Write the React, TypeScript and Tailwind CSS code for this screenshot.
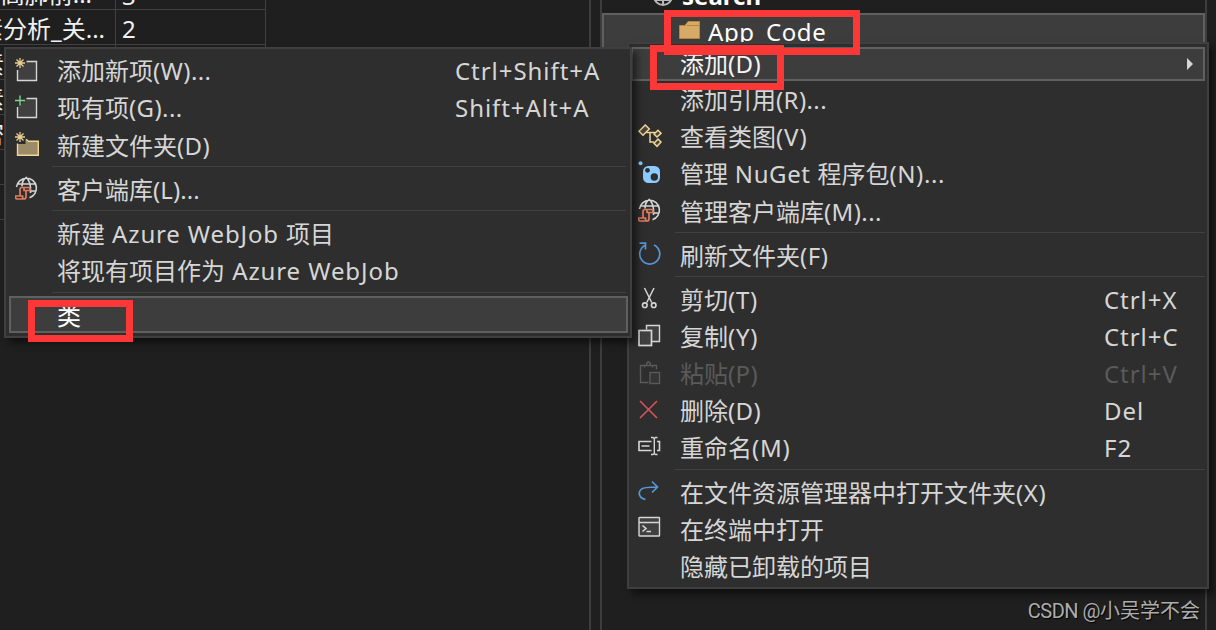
import type { ReactNode } from "react";
import clsx from "clsx";

type Item = {
  label: string;
  icon?: ReactNode;
  shortcut?: string;
  disabled?: boolean;
  tracking?: string;
};

const LIGHT = "#d6d6d6";

const Icon = ({ children, className }: { children: ReactNode; className?: string }) => (
  <svg width="24" height="24" viewBox="0 0 24 24" fill="none" stroke={LIGHT} strokeWidth="1.4" className={className}>
    {children}
  </svg>
);

const Spark = () => (
  <path d="M5 0V10M0 5H10M1.5 1.5L8.5 8.5M8.5 1.5L1.5 8.5" stroke="#e8cf91" strokeWidth="1.3" />
);

const NewItemIcon = () => (
  <Icon>
    <path d="M11 3.5H21.5V22.5H2.5V12L6 9Z" fill="#404040" stroke="none" />
    <path d="M11.5 3.5H21.5V22.5H2.5V12" />
    <Spark />
  </Icon>
);

const ExistingItemIcon = () => (
  <Icon>
    <path d="M11 3.5H21.5V22.5H2.5V12L6 9Z" fill="#404040" stroke="none" />
    <path d="M11.5 3.5H21.5V22.5H2.5V12" />
    <path d="M5 0.5V10.5M0 5.5H10" stroke="#7fd38a" />
  </Icon>
);

const NewFolderIcon = () => (
  <Icon>
    <path d="M2.5 12V23.3H23.3V9.3H13L10.5 7.5V12Z" fill="#9b8c67" stroke="none" />
    <path d="M2.5 11.5V23.3H23.3V9.3H13.5L11 7.3" stroke="#f0d697" />
    <Spark />
  </Icon>
);

const LibraryIcon = () => (
  <Icon>
    <path
      d="M1.5 11A10 10 0 1 1 14.5 21.7M2.3 8H20.7M15 15H20.5M7 10.5Q7 4 11.3 1.5Q16 6 15.5 15V17"
      strokeWidth="1.6"
    />
    <path
      d="M5 19.5V13.5Q5 11.5 7 11.5H13.5Q15 11.5 15 13.5V14.5H11V20.5Q11 23 9 23H2Q0.5 23 0.5 20H7.5Q7.5 23 9 23M9 11.5V14.5H11"
      stroke="#e07c60"
      strokeWidth="1.7"
    />
  </Icon>
);

const ClassDiagramIcon = () => (
  <Icon>
    <g stroke="#f0d697" strokeWidth="1.5">
      <path d="M7.3 1L11.3 5L5 11.3L1 7.3Z" fill="#4b4638" />
      <path d="M8.5 8.5H17M12 8.5V18H16" />
      <path d="M20 6.3L23 9.3L19 13L16 10Z" fill="#4b4638" />
      <path d="M20 15L23 18L19 22.3L16 19.3Z" fill="#4b4638" />
    </g>
  </Icon>
);

const NuGetIcon = () => (
  <Icon>
    <circle cx="2.5" cy="2.3" r="2" fill="#8ccbff" stroke="none" />
    <rect x="5" y="5" width="17" height="17" rx="5.5" fill="#8ccbff" stroke="none" />
    <circle cx="9.5" cy="9.3" r="2.4" fill="#2e2e2e" stroke="none" />
    <circle cx="16.3" cy="16" r="3.7" fill="#2e2e2e" stroke="none" />
  </Icon>
);

const RefreshIcon = () => (
  <Icon>
    <path d="M7.5 3A10 10 0 1 0 16 3M1.5 1.2H7.5V7.5" stroke="#5697d8" strokeWidth="1.7" />
  </Icon>
);

const CutIcon = () => (
  <Icon>
    <path d="M6.5 2L13.7 16.5M16 2L8.8 16.5" strokeWidth="1.5" />
    <circle cx="6.8" cy="19.2" r="2.3" strokeWidth="1.6" />
    <circle cx="15.7" cy="19.2" r="2.3" strokeWidth="1.6" />
  </Icon>
);

const CopyIcon = () => (
  <Icon>
    <path d="M8.5 5.5V1.5H21.5V17.5H14" fill="#404040" />
    <rect x="1" y="6.5" width="12.5" height="15" fill="#404040" strokeWidth="1.7" />
  </Icon>
);

const PasteIcon = () => (
  <Icon>
    <g stroke="#5a5a5a">
      <path d="M10.5 21.5H2.5V4.5H18.5V8.5M6.5 6.5V4.5H8.5Q8.5 1 10.5 1T12.5 4.5H14.5V6.5" />
      <rect x="12" y="11.5" width="9.5" height="11" fill="#353535" />
    </g>
  </Icon>
);

const DeleteIcon = () => (
  <Icon>
    <path d="M2 3L19 20M19 3L2 20" stroke="#d9515b" strokeWidth="1.7" />
  </Icon>
);

const RenameIcon = () => (
  <Icon>
    <path d="M13.5 6.5H1V15.5H13.5M19 6.5H21.5V15.5H19M3.5 11H11.5" strokeWidth="1.6" />
    <path d="M13 2.5H15L16.3 3.5L17.5 2.5H19.5M16.3 3.5V18.5M13 19.5H15L16.3 18.5L17.5 19.5H19.5" />
  </Icon>
);

const OpenIcon = () => (
  <Icon>
    <path d="M7.5 20.5C1.5 19.5 -0.5 14 3 10.5Q5 8 19 8M14 2.5L19.5 8L14 13.5" stroke="#5697d8" strokeWidth="1.7" />
  </Icon>
);

const TerminalIcon = () => (
  <Icon>
    <rect x="1" y="1.5" width="20.5" height="18.5" fill="#404040" rx="0.5" />
    <path d="M1 6.5H21.5M4.5 9.5L8 12.5L4.5 15.5M8.5 15.5H13" strokeWidth="1.6" />
  </Icon>
);

const addMenu: (Item | null)[] = [
  { label: "添加新项(W)...", icon: <NewItemIcon />, shortcut: "Ctrl+Shift+A" },
  { label: "现有项(G)...", icon: <ExistingItemIcon />, shortcut: "Shift+Alt+A" },
  { label: "新建文件夹(D)", icon: <NewFolderIcon /> },
  null,
  { label: "客户端库(L)...", icon: <LibraryIcon />, tracking: "tracking-[0.1px]" },
  null,
  { label: "新建 Azure WebJob 项目", tracking: "tracking-[0.85px]" },
  { label: "将现有项目作为 Azure WebJob", tracking: "tracking-[0.9px]" },
  null,
];

const contextMenu: (Item | null)[] = [
  { label: "添加引用(R)..." },
  { label: "查看类图(V)", icon: <ClassDiagramIcon />, tracking: "tracking-[0.9px]" },
  { label: "管理 NuGet 程序包(N)...", icon: <NuGetIcon />, tracking: "tracking-[0.6px]" },
  { label: "管理客户端库(M)...", icon: <LibraryIcon /> },
  null,
  { label: "刷新文件夹(F)", icon: <RefreshIcon />, tracking: "tracking-[0.6px]" },
  null,
  { label: "剪切(T)", icon: <CutIcon />, shortcut: "Ctrl+X", tracking: "tracking-[0.7px]" },
  { label: "复制(Y)", icon: <CopyIcon />, shortcut: "Ctrl+C", tracking: "tracking-[0.7px]" },
  { label: "粘贴(P)", icon: <PasteIcon />, shortcut: "Ctrl+V", disabled: true },
  { label: "删除(D)", icon: <DeleteIcon />, shortcut: "Del" },
  { label: "重命名(M)", icon: <RenameIcon />, shortcut: "F2", tracking: "tracking-[0.8px]" },
  null,
  { label: "在文件资源管理器中打开文件夹(X)", icon: <OpenIcon />, tracking: "tracking-[0.6px]" },
  { label: "在终端中打开", icon: <TerminalIcon /> },
  { label: "隐藏已卸载的项目" },
];

// Only the latin runs are letter-spaced, CJK keeps its own advance.
const Label = ({ text, tracking = "tracking-[0.4px]" }: { text: string; tracking?: string }) => (
  <>
    {text.split(/([\x20-\x7e]+)/).map((run, i) => (
      <span key={i} className={i % 2 ? tracking : undefined}>
        {run}
      </span>
    ))}
  </>
);

const Row = ({ item, shortcutWidth }: { item: Item; shortcutWidth: string }) => (
  <div className={clsx("flex h-[37.15px] items-center", item.disabled ? "text-[#5a5a5a]" : "text-[#d6d6d6]")}>
    <div className="w-[42px] shrink-0">
      <div className="-mt-[3px]">{item.icon}</div>
    </div>
    <div className="grow">
      <Label text={item.label} tracking={item.tracking} />
    </div>
    <div className={clsx("shrink-0", shortcutWidth)}>
      {item.shortcut && <Label text={item.shortcut} tracking="tracking-[0.95px]" />}
    </div>
  </div>
);

const Separator = () => (
  <div className="h-[7px] pt-[2px] pl-[37px]">
    <div className="h-px bg-[#414141]" />
  </div>
);

const Rows = ({ items, shortcutWidth }: { items: (Item | null)[]; shortcutWidth: string }) => (
  <>
    {items.map((item, i) =>
      item ? <Row key={i} item={item} shortcutWidth={shortcutWidth} /> : <Separator key={i} />
    )}
  </>
);

const gridRows = [
  { name: "高肺前...", count: "3", cell: "justify-end pr-[23px]" },
  { name: "素分析_关...", count: "2", cell: "justify-end pr-[10px]" },
  { name: "素", cell: "-indent-[20px]" },
  { name: "素", cell: "-indent-[20px]" },
  { name: "密", cell: "-indent-[20px]" },
  { name: "" },
  { name: "" },
];

const Marker = ({ className }: { className: string }) => (
  <div className={clsx("absolute border-[7px] border-[#fc3737]", className)} />
);

export default function App() {
  return (
    <div className="relative flex h-[630px] w-[1216px] overflow-hidden whitespace-nowrap bg-[#1f1f1f] font-['Noto_Sans','Noto_Sans_CJK_SC',sans-serif] text-[24px] leading-[34px] text-[#d6d6d6]">
      <div className="w-[591px] shrink-0 border-r-2 border-[#3d3d3d]">
        <div className="-mt-[25px] w-[266px] text-[#f1f1f1]">
          {gridRows.map(({ name, count, cell }, i) => (
            <div key={i} className="flex h-[35px] border-r border-b border-[#424242] leading-[37px]">
              <div className={clsx("flex w-[116px] shrink-0 overflow-hidden border-r border-[#424242]", cell)}>
                <span>{name}</span>
              </div>
              <div className={clsx("pl-[6px]", i === 0 && "pt-[2px]")}>{count}</div>
            </div>
          ))}
        </div>
      </div>
      <div className="ml-[9px] w-[607px] shrink-0 border-x-2 border-[#3d3d3d]">
        <div className="flex h-[13px] items-end pl-[50px] font-bold text-white">
          <svg width="22" height="22" viewBox="0 0 22 22" fill="none" stroke="#b8b8b8" strokeWidth="2" className="mb-[6px] shrink-0">
            <circle cx="11" cy="11" r="9" />
            <path d="M3 15H19M11 2V20" />
          </svg>
          <span className="ml-[8px]">search</span>
        </div>
        <div className="flex h-[37px] items-center border-2 border-[#606060] bg-[#3d3d3d] pl-[75px] text-white">
          <svg width="21" height="18" viewBox="0 0 21 18" fill="#d8aa68" stroke="#b98639" className="-mt-1">
            <path d="M0.5 4.5H6L9 0.5H20.5V17.5H0.5Z" />
            <path d="M8 4.5H20" />
          </svg>
          <span className="ml-[8px] tracking-[0.6px]">App_Code</span>
        </div>
      </div>

      <div className="absolute top-[42px] left-[627px] h-[547px] w-[582px] border-2 border-[#3f3f3f] bg-[#2e2e2e] pt-[3px] pr-[2px] pl-[2px] shadow-[5px_5px_7px_rgba(0,0,0,0.5)]">
        <div className="flex h-[34px] items-center border-2 border-[#606060] bg-[#3d3d3d] pr-[9px] pl-[47px] text-[#f5f5f5]">
          <div className="grow">
            <Label text="添加(D)" />
          </div>
          <svg width="8" height="12" viewBox="0 0 8 12" fill="#d6d6d6" className="-mt-px">
            <path d="M1 0L7 6L1 12Z" />
          </svg>
        </div>
        <div className="pt-[0.6px] pl-[7px]">
          <Rows items={contextMenu} shortcutWidth="w-[101px]" />
        </div>
      </div>

      <div className="absolute top-[47px] left-[4px] h-[291px] w-[628px] border-2 border-[#3f3f3f] bg-[#2e2e2e] pt-[3px] pr-[2px] pl-[3px] shadow-[5px_5px_7px_rgba(0,0,0,0.5)]">
        <div className="h-[244px] pt-[0.7px] pr-[2px] pl-[6px]">
          <Rows items={addMenu} shortcutWidth="w-[171px]" />
        </div>
        <div className="flex h-[37px] items-center border-2 border-[#606060] bg-[#3d3d3d] pt-[3px] pl-[46px] text-white">类</div>
      </div>

      <Marker className="top-[10px] left-[664px] h-[45px] w-[196px]" />
      <Marker className="top-[45px] left-[650px] h-[45px] w-[134px]" />
      <Marker className="top-[300px] left-[28px] h-[42px] w-[105px]" />

      <div className="absolute right-[16px] bottom-[2px] font-[Roboto,'Noto_Sans_CJK_SC',sans-serif] text-[20px] leading-[34px] text-[#adadad] [text-shadow:1px_1px_1px_#000]">
        <span className="tracking-[-0.5px]">CSDN @</span>小吴学不会
      </div>
    </div>
  );
}
